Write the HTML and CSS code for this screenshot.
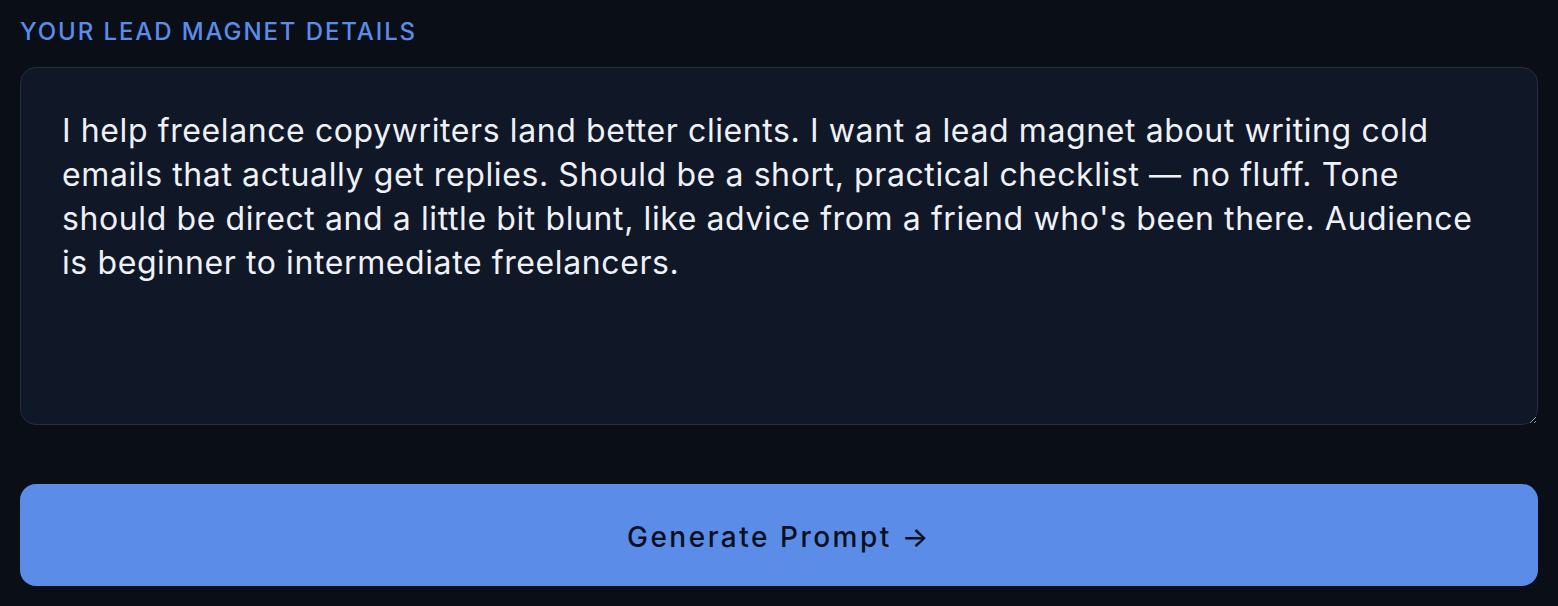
FILE: index.html
```html
<!DOCTYPE html>
<html lang="en">
<head>
<meta charset="utf-8">
<title>Lead Magnet</title>
<link rel="stylesheet" href="styles.css">
</head>
<body>
<main class="panel">
  <label class="field-label" for="details">Your Lead Magnet Details</label>
  <textarea id="details" class="details">I help freelance copywriters land better clients. I want a lead magnet about writing cold emails that actually get replies. Should be a short, practical checklist — no fluff. Tone should be direct and a little bit blunt, like advice from a friend who's been there. Audience is beginner to intermediate freelancers.</textarea>
  <button class="generate" type="button">Generate Prompt →</button>
</main>
</body>
</html>
```

FILE: styles.css
```css
html, body {
  margin: 0;
  padding: 0;
  background: #0a0e17;
}

body {
  font-family: Inter, "Noto Sans", "Liberation Sans", sans-serif;
}

.panel {
  display: flex;
  flex-direction: column;
  padding: 16px 20px 20px;
  box-sizing: border-box;
}

.field-label {
  display: block;
  font-size: 24px;
  line-height: 32px;
  font-weight: 500;
  letter-spacing: 1.9px;
  text-transform: uppercase;
  color: #5b8de8;
  margin-bottom: 19px;
}

.details {
  display: block;
  box-sizing: border-box;
  width: 100%;
  height: 358px;
  margin: 0;
  padding: 41px 41px 39px;
  background: #101727;
  border: 1px solid #232d42;
  border-radius: 16px;
  color: #eef1f6;
  color-scheme: dark;
  font-family: Inter, "Noto Sans", "Liberation Sans", sans-serif;
  font-size: 32px;
  line-height: 44px;
  letter-spacing: 0.6px;
  resize: vertical;
  outline: none;
}

.generate {
  display: flex;
  align-items: center;
  justify-content: center;
  margin-top: 59px;
  height: 102px;
  width: 100%;
  padding: 4px 0 0;
  border: none;
  border-radius: 16px;
  background: #5b8de8;
  color: #0b1020;
  font-family: Inter, "Noto Sans", "Liberation Sans", sans-serif;
  font-size: 28px;
  font-weight: 500;
  letter-spacing: 2.5px;
  cursor: pointer;
}
```
